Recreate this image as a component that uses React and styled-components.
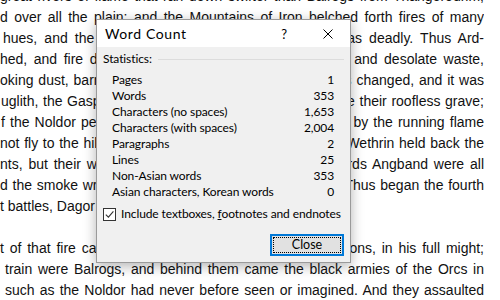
import React from "react";
import styled, { createGlobalStyle } from "styled-components";

const Global = createGlobalStyle`
  html, body { margin: 0; padding: 0; background: #fff; overflow: hidden; }
  body { width: 500px; height: 300px; position: relative; }
`;

const Page = styled.div`
  position: relative;
  width: 500px;
  height: 300px;
  overflow: hidden;
  background: #fff;
`;

const Doc = styled.div`
  width: 484px;
  margin-top: -14px;
  font-family: "Liberation Sans", Arial, sans-serif;
  font-size: 14px;
  line-height: 21px;
  color: #111;
`;

const Line = styled.div`
  height: 21px;
  text-align: ${(p) => (p.$last ? "left" : "justify")};
  text-align-last: ${(p) => (p.$last ? "left" : "justify")};
  text-indent: ${(p) => p.$indent || 0}px;
  overflow: hidden;
`;

const Dialog = styled.div`
  position: absolute;
  left: 96px;
  top: 19px;
  width: 253px;
  height: 242px;
  border: 1px solid #9a9a9a;
  background: #f0f0f0;
  box-shadow: 0 3px 12px rgba(0, 0, 0, 0.3);
  display: flex;
  flex-direction: column;
  font-family: Lato, "Noto Sans", sans-serif;
  font-size: 12px;
  letter-spacing: -0.1px;
  color: #000;
`;

const TitleBar = styled.div`
  height: 27px;
  background: #fff;
  display: flex;
  align-items: center;
`;

const Title = styled.div`
  flex: 1;
  padding-left: 8px;
  font-size: 14px;
  letter-spacing: 0.6px;
  line-height: 18px;
`;

const TitleButton = styled.div`
  width: 44px;
  height: 27px;
  display: flex;
  align-items: center;
  justify-content: center;
  font-size: 13px;
  line-height: 16px;
`;

const Body = styled.div`
  flex: 1;
  display: flex;
  flex-direction: column;
  padding: 4px 6px 0 6px;
  line-height: 16px;
`;

const Group = styled.div`
  display: flex;
  align-items: center;
  height: 16px;
`;

const GroupLine = styled.div`
  flex: 1;
  height: 1px;
  background: #dcdcdc;
  margin-left: 6px;
`;

const Stats = styled.div`
  margin-top: 5px;
  padding: 0 10px 0 9px;
`;

const Row = styled.div`
  display: flex;
  justify-content: space-between;
  height: 16px;
  line-height: 16px;
`;

const CheckRow = styled.label`
  display: flex;
  align-items: center;
  gap: 5px;
  margin-top: 6px;
  height: 16px;
  white-space: nowrap;
`;

const Box = styled.span`
  flex: none;
  width: 11px;
  height: 11px;
  border: 1px solid #333;
  background: #fff;
  display: flex;
  align-items: center;
  justify-content: center;
`;

const Accel = styled.span`
  text-decoration: underline;
`;

const Footer = styled.div`
  display: flex;
  justify-content: flex-end;
  margin-top: 12px;
`;

const Button = styled.button`
  width: 74px;
  height: 22px;
  padding: 1px;
  border: 2px solid #0078d7;
  background: #e1e1e1;
  font-family: inherit;
  font-size: 12.5px;
  color: #000;
  display: flex;
`;

const Focus = styled.span`
  flex: 1;
  border: 1px dotted #000;
  display: flex;
  align-items: center;
  justify-content: center;
  line-height: 14px;
`;

const lines = [
  { t: "great rivers of flame that ran down swifter than Balrogs from Thangorodrim," },
  { t: "d over all the plain; and the Mountains of Iron belched forth fires of many" },
  { t: "hues, and the fume thereof poisoned the air, and was deadly. Thus Ard-", i: 3 },
  { t: "hed, and fire devoured its grass; it became a burned and desolate waste," },
  { t: "oking dust, barren and lifeless. Thereafter its name was changed, and it was" },
  { t: "uglith, the Gasping Dust. Many charred bones had there their roofless grave;", i: 1 },
  { t: "f the Noldor perished in that burning, who were caught by the running flame", i: 1 },
  { t: "not fly to the hills. The heights of Dorthonion and Ered Wethrin held back the" },
  { t: "nts, but their woods upon the slopes that looked towards Angband were all" },
  { t: "d the smoke wrought confusion among the defenders. Thus began the fourth" },
  { t: "t battles, Dagor Bragollach, the Battle of Sudden Flame.", last: true },
  { t: "\u00a0", last: true },
  { t: "t of that fire came Glaurung the golden, father of dragons, in his full might;" },
  { t: "train were Balrogs, and behind them came the black armies of the Orcs in", i: 5 },
  { t: "such as the Noldor had never before seen or imagined. And they assaulted", i: 5 },
];

const stats = [
  ["Pages", "1"],
  ["Words", "353"],
  ["Characters (no spaces)", "1,653"],
  ["Characters (with spaces)", "2,004"],
  ["Paragraphs", "2"],
  ["Lines", "25"],
  ["Non-Asian words", "353"],
  ["Asian characters, Korean words", "0"],
];

export default function App() {
  return (
    <Page>
      <Global />
      <Doc>
        {lines.map((l, k) => (
          <Line key={k} $last={l.last} $indent={l.i}>
            {l.t}
          </Line>
        ))}
      </Doc>
      <Dialog>
        <TitleBar>
          <Title>Word Count</Title>
          <TitleButton>?</TitleButton>
          <TitleButton>
            <svg width="10" height="10" viewBox="0 0 10 10">
              <path d="M0.5 0.5 L9.5 9.5 M9.5 0.5 L0.5 9.5" stroke="#000" strokeWidth="1" fill="none" />
            </svg>
          </TitleButton>
        </TitleBar>
        <Body>
          <Group>
            <span>Statistics:</span>
            <GroupLine />
          </Group>
          <Stats>
            {stats.map(([k, v]) => (
              <Row key={k}>
                <span>{k}</span>
                <span>{v}</span>
              </Row>
            ))}
          </Stats>
          <CheckRow>
            <Box>
              <svg width="9" height="9" viewBox="0 0 9 9">
                <path d="M0.8 4.6 L3.4 7.2 L8.4 1.4" stroke="#333" strokeWidth="1.1" fill="none" />
              </svg>
            </Box>
            <span>
              Include textboxes, <Accel>f</Accel>ootnotes and endnotes
            </span>
          </CheckRow>
          <Footer>
            <Button>
              <Focus>Close</Focus>
            </Button>
          </Footer>
        </Body>
      </Dialog>
    </Page>
  );
}
